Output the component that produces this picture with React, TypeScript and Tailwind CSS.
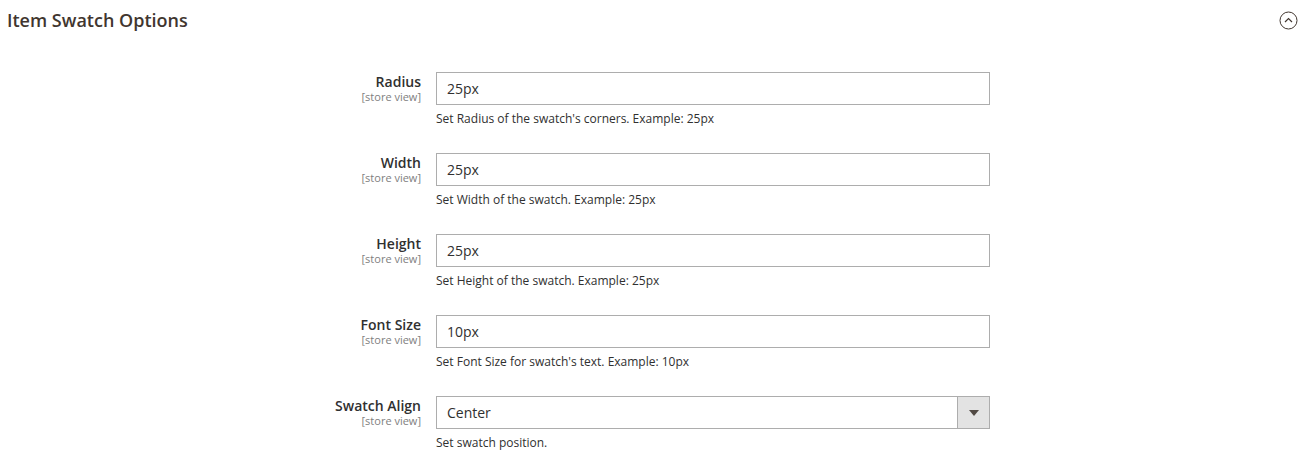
import React from "react";

interface FieldProps {
  label: string;
  value: string;
  note: string;
  select?: boolean;
}

const Field = ({ label, value, note, select }: FieldProps) => {
  return (
    <div className="flex items-start mb-[26px]">
      <div className="w-[421px] text-right pt-[1px]">
        <div className="text-[14px] leading-[18px] font-semibold text-[#303030]">{label}</div>
        <div className="text-[11px] leading-[12px] text-[#808080]">[store view]</div>
      </div>
      <div className="ml-[15px] w-[554px]">
        {select ? (
          <div className="flex h-[33px] border border-[#adadad] bg-white">
            <div className="flex-1 flex items-center pl-[10px] text-[14px] text-[#303030]">{value}</div>
            <div className="w-[33px] -my-px -mr-px border border-[#adadad] bg-[#e3e3e3] flex items-center justify-center">
              <svg width="10" height="6" viewBox="0 0 10 6">
                <path d="M0 0 H10 L5 6 Z" fill="#514943" />
              </svg>
            </div>
          </div>
        ) : (
          <div className="h-[33px] border border-[#adadad] bg-white flex items-center pl-[10px] text-[14px] text-[#303030]">
            {value}
          </div>
        )}
        <div className="mt-[6px] text-[12px] leading-[16px] text-[#303030]">{note}</div>
      </div>
    </div>
  );
};

const fields: FieldProps[] = [
  { label: "Radius", value: "25px", note: "Set Radius of the swatch's corners. Example: 25px" },
  { label: "Width", value: "25px", note: "Set Width of the swatch. Example: 25px" },
  { label: "Height", value: "25px", note: "Set Height of the swatch. Example: 25px" },
  { label: "Font Size", value: "10px", note: "Set Font Size for swatch's text. Example: 10px" },
  { label: "Swatch Align", value: "Center", note: "Set swatch position.", select: true },
];

export default function App() {
  return (
    <div className="w-[1313px] h-[466px] bg-white overflow-hidden" style={{ fontFamily: '"Open Sans", sans-serif' }}>
      <div className="flex items-center justify-between h-[40px] pl-[7px] pr-[15px]">
        <h2 className="text-[18px] font-semibold text-[#41362f]">Item Swatch Options</h2>
        <svg width="19" height="19" viewBox="0 0 19 19">
          <circle cx="9.5" cy="9.5" r="8.5" fill="none" stroke="#41362f" strokeWidth="1" />
          <path d="M6 11 L9.5 7.5 L13 11" fill="none" stroke="#41362f" strokeWidth="1.2" />
        </svg>
      </div>
      <div className="pt-[32px]">
        {fields.map((f, i) => (
          <Field key={i} {...f} />
        ))}
      </div>
    </div>
  );
}
